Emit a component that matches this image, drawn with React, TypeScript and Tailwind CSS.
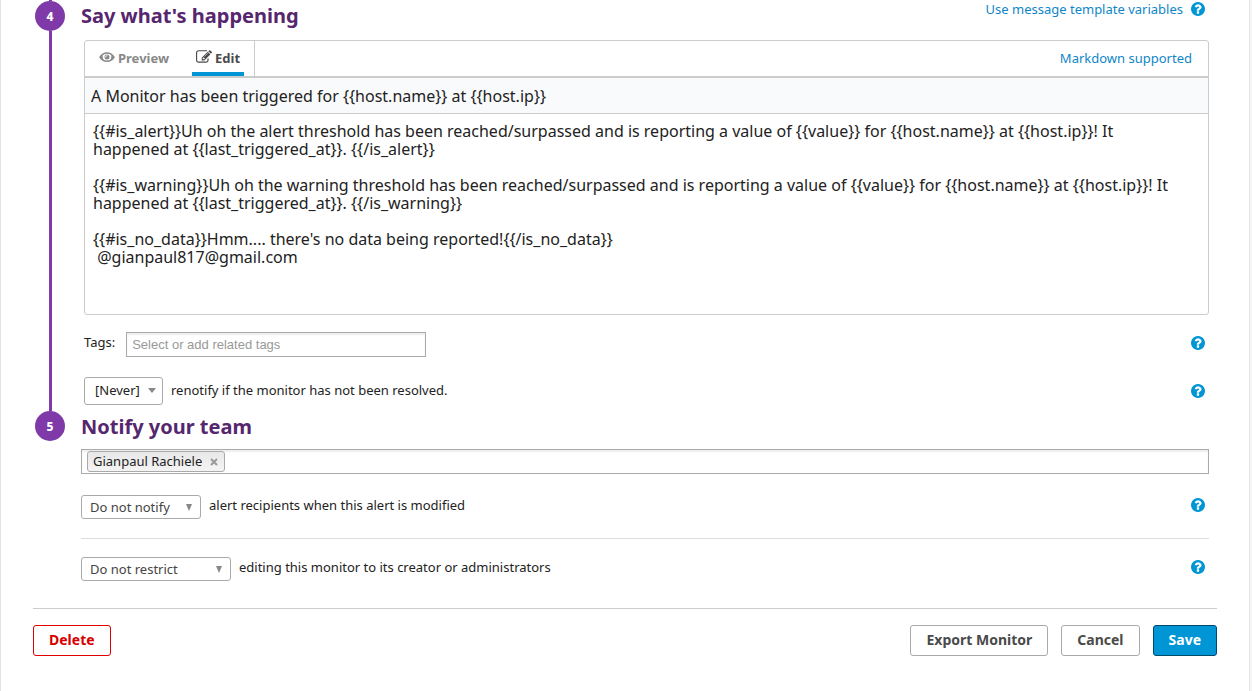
import React, { useState } from "react";

const MESSAGE = `{{#is_alert}}Uh oh the alert threshold has been reached/surpassed and is reporting a value of {{value}} for {{host.name}} at {{host.ip}}! It
happened at {{last_triggered_at}}. {{/is_alert}}

{{#is_warning}}Uh oh the warning threshold has been reached/surpassed and is reporting a value of {{value}} for {{host.name}} at {{host.ip}}! It
happened at {{last_triggered_at}}. {{/is_warning}}

{{#is_no_data}}Hmm.... there's no data being reported!{{/is_no_data}}
 @gianpaul817@gmail.com`;

function EyeIcon() {
  return (
    <svg viewBox="0 0 16 16" className="mb-[3px] h-4 w-4" aria-hidden="true">
      <path
        d="M1 8.200C2.600 5.300 5 3.900 8 3.900s5.400 1.400 7 4.300C13.400 11 11 12.300 8 12.300S2.600 11 1 8.200z"
        fill="none"
        stroke="currentColor"
        strokeWidth="1.500"
        strokeLinejoin="round"
      />
      <path d="M4.200 5.200C3.800 6 3.600 6.900 3.700 8c.1 1.500.7 2.700 1.700 3.600L2.500 9.800 1.400 8.200zM11.800 5.200c.4.8.6 1.700.5 2.800-.1 1.500-.7 2.700-1.700 3.600l2.900-1.800 1.100-1.600z" fill="currentColor" />
      <circle cx="8" cy="8" r="2.500" fill="currentColor" />
      <path d="M6.500 8A1.500 1.500 0 0 1 8 6.500" fill="none" stroke="#fff" strokeWidth="0.800" strokeLinecap="round" />
    </svg>
  );
}

function EditIcon() {
  return (
    <svg viewBox="0 0 1792 1792" className="mb-[3px] h-4 w-4" fill="currentColor" aria-hidden="true">
      <path d="M888 1184l116-116-152-152-116 116v56h96v96h56zm440-720q-16-16-33 1l-350 350q-17 17-1 33t33-1l350-350q17-17 1-33zm80 594v190q0 119-84.500 203.500t-203.500 84.500h-832q-119 0-203.500-84.500t-84.500-203.500v-832q0-119 84.500-203.500t203.500-84.500h832q63 0 117 25 15 7 18 23 3 17-9 29l-49 49q-14 14-32 8-23-6-45-6h-832q-66 0-113 47t-47 113v832q0 66 47 113t113 47h832q66 0 113-47t47-113v-126q0-13 9-22l64-64q15-15 35-7t20 29zm-96-738l288 288-672 672h-288v-288zm444 132l-92 92-288-288 92-92q28-28 68-28t68 28l152 152q28 28 28 68t-28 68z" />
    </svg>
  );
}

function Help({ label }: { label: string }) {
  return (
    <button type="button" aria-label={label} className="shrink-0 text-[#0096d6]">
      <svg viewBox="128 128 1536 1536" className="h-[14px] w-[14px]" fill="currentColor" aria-hidden="true">
        <path d="M1024 1376v-192q0-14-9-23t-23-9h-192q-14 0-23 9t-9 23v192q0 14 9 23t23 9h192q14 0 23-9t9-23zm256-672q0-88-55.500-163t-138.500-116-170-41q-243 0-371 213-15 24 8 42l132 100q7 6 19 6 16 0 25-12 53-68 86-92 34-24 86-24 48 0 85.500 26t37.500 59q0 38-20 61t-68 45q-63 28-115.500 86.500t-52.500 125.500v36q0 14 9 23t23 9h192q14 0 23-9t9-23q0-19 21.500-49.500t54.500-49.500q32-18 49-28.500t46-35 44.500-48 28-60.500 12.500-81zm384 192q0 209-103 385.500t-279.500 279.500-385.500 103-385.500-103-279.500-279.500-103-385.500 103-385.500 279.500-279.500 385.500-103 385.500 103 279.500 279.500 103 385.500z" />
      </svg>
    </button>
  );
}

function Arrow({ shape }: { shape: "wide" | "tall" }) {
  return (
    <svg
      viewBox="0 0 8 8"
      className="pointer-events-none absolute top-1/2 right-[7px] h-2 w-2 -translate-y-1/2"
      fill="#888"
      aria-hidden="true"
    >
      {shape === "wide" ? <path d="M0 1h8L4 6z" /> : <path d="M0 1h6L3 8z" />}
    </svg>
  );
}

function Step({
  number,
  title,
  aside,
  last,
  children,
}: {
  number: number;
  title: string;
  aside?: React.ReactNode;
  last?: boolean;
  children: React.ReactNode;
}) {
  return (
    <section className="flex">
      <div className="mr-[14px] flex w-[34px] shrink-0 flex-col items-center">
        {!last && <span className="h-px w-[3px] bg-[#7f39a8]" />}
        <span className="flex h-[30px] w-[30px] items-center justify-center rounded-full bg-[#7f39a8] pt-px text-xs font-extrabold text-white">
          {number}
        </span>
        {!last && <span className="w-[3px] flex-1 bg-[#7f39a8]" />}
      </div>
      <div className="min-w-0 flex-1 pr-2">
        <div className="flex items-start justify-between">
          <h2 className="text-xl leading-8 font-bold text-[#56266f]">{title}</h2>
          {aside}
        </div>
        {children}
      </div>
    </section>
  );
}

export default function App() {
  const [tab, setTab] = useState("edit");
  return (
    <div className="bg-[#f5f5f5] pr-[2px] font-['Noto_Sans',sans-serif] text-[13px] text-[#222]">
      <main className="min-h-screen border-x border-[#e3e3e3] bg-white px-8">
        <Step
          number={4}
          title="Say what's happening"
          aside={
            <div className="flex items-center gap-2 pr-1 leading-[18px]">
              <a href="#variables" className="text-[#0f86c8]">Use message template variables</a>
              <Help label="Help on template variables" />
            </div>
          }
        >
          <div className="pt-2 pb-[6px] pl-[3px]">
            <div className="rounded-[3px] border border-[#ccc]">
              <div className="flex h-[37px] items-stretch justify-between border-b-2 border-[#ccc]">
                <div className="flex gap-[19px] border-r border-[#ccc] px-[10px] font-bold">
                  <button type="button" onClick={() => setTab("preview")} className="flex items-center gap-[3px] px-1 text-[#888]">
                    <EyeIcon />
                    Preview
                  </button>
                  <button type="button" onClick={() => setTab("edit")} aria-pressed={tab === "edit"} className="flex items-center gap-[3px] border-b-4 border-[#0096d6] px-1 pt-1 text-[#4a4a4a]">
                    <EditIcon />
                    Edit
                  </button>
                </div>
                <a href="#markdown" className="self-center pt-px pr-4 text-[#0f86c8]">Markdown supported</a>
              </div>
              <input
                aria-label="Title"
                defaultValue="A Monitor has been triggered for {{host.name}} at {{host.ip}}"
                className="block h-9 w-full border-b border-[#ccc] bg-[#f9fafc] px-[6px] text-base"
              />
              <textarea
                aria-label="Message"
                defaultValue={MESSAGE}
                className="block h-[200px] w-full resize-none px-2 py-2 text-base leading-[18px] outline-none"
              />
            </div>
            <div className="mt-[17px] flex items-start justify-between pr-1">
              <div className="flex items-start gap-[11px]">
                <label htmlFor="tags" className="pt-px">Tags:</label>
                <input
                  id="tags"
                  placeholder="Select or add related tags"
                  className="h-[25px] w-[300px] border border-[#aaa] px-[5px] font-['Liberation_Sans',sans-serif] shadow-[inset_0_2px_2px_#eee] placeholder:text-[#999]"
                />
              </div>
              <div className="flex pt-1">
                <Help label="Help on tags" />
              </div>
            </div>
            <div className="mt-5 flex items-center justify-between pr-1">
              <div className="flex items-center gap-2">
                <div className="relative">
                  <select id="renotify" className="block h-7 w-[79px] appearance-none rounded-[3px] border border-[#aaa] bg-white pl-[10px]">
                    <option>[Never]</option>
                  </select>
                  <Arrow shape="wide" />
                </div>
                <label htmlFor="renotify">renotify if the monitor has not been resolved.</label>
              </div>
              <Help label="Help on renotification" />
            </div>
          </div>
        </Step>

        <Step number={5} title="Notify your team" last>
          <div className="mt-[6px] flex h-[25px] items-center border border-[#aaa] pl-[5px] shadow-[inset_0_2px_2px_#eee]">
            <span className="flex h-[21px] shrink-0 items-center gap-2 rounded-[3px] border border-[#aaa] bg-linear-to-b from-[#e8e8e8] to-[#f4f4f4] pr-[6px] pl-[5px]">
              Gianpaul Rachiele
              <button type="button" aria-label="Remove Gianpaul Rachiele" className="text-[#999]">
                <svg viewBox="0 0 8 8" className="h-2 w-2" stroke="currentColor" strokeWidth="2" aria-hidden="true">
                  <path d="M1 1l6 6M7 1l-6 6" />
                </svg>
              </button>
            </span>
            <input aria-label="Recipients" className="h-full min-w-0 flex-1 bg-transparent px-1 outline-none" />
          </div>
          <div className="mt-[21px] flex items-start justify-between border-b border-[#ddd] pr-1 pb-[19px]">
            <div className="flex items-start gap-2">
              <div className="relative">
                <select id="notify" className="block h-6 w-[120px] appearance-none rounded-[3px] border border-[#aaa] bg-white pt-px pl-2 text-[#444]">
                  <option>Do not notify</option>
                </select>
                <Arrow shape="tall" />
              </div>
              <label htmlFor="notify" className="pt-px">alert recipients when this alert is modified</label>
            </div>
            <div className="flex pt-[3px]">
              <Help label="Help on notifications" />
            </div>
          </div>
          <div className="mt-[18px] flex items-start justify-between pr-1">
            <div className="flex items-start gap-2">
              <div className="relative">
                <select id="restrict" className="block h-6 w-[150px] appearance-none rounded-[3px] border border-[#aaa] bg-white pt-px pl-2 text-[#444]">
                  <option>Do not restrict</option>
                </select>
                <Arrow shape="tall" />
              </div>
              <label htmlFor="restrict" className="pt-px">editing this monitor to its creator or administrators</label>
            </div>
            <div className="flex pt-[3px]">
              <Help label="Help on restrictions" />
            </div>
          </div>
        </Step>

        <footer className="mt-[27px] flex items-center justify-between border-t border-[#ccc] pt-4 text-sm font-bold">
          <button type="button" className="h-[31px] rounded-[3px] border border-[#e00000] px-[15px] pb-[2px] text-[#d80000]">Delete</button>
          <div className="flex gap-[13px] text-[#4a4a4a]">
            <button type="button" className="h-[31px] rounded-[3px] border border-[#aaa] px-[15px] pb-[2px]">Export Monitor</button>
            <button type="button" className="h-[31px] rounded-[3px] border border-[#aaa] px-[15px] pb-[2px]">Cancel</button>
            <button type="button" className="h-[31px] rounded-[3px] border border-[#00496b] bg-[#0096d6] px-[15px] pb-[2px] text-white">Save</button>
          </div>
        </footer>
      </main>
    </div>
  );
}
